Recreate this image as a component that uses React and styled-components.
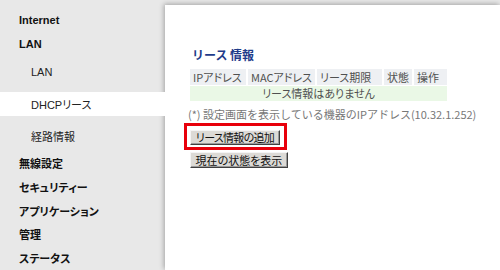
import React from "react";
import styled, { createGlobalStyle } from "styled-components";

const Global = createGlobalStyle`
  html, body { margin: 0; padding: 0; }
  body {
    background: #e8e8e8;
    font-family: "Liberation Sans", "Noto Sans CJK JP", sans-serif;
    font-feature-settings: "palt";
    color: #222;
    width: 500px;
    height: 270px;
    overflow: hidden;
  }
`;

const Page = styled.div`
  display: flex;
  width: 500px;
  height: 270px;
  overflow: hidden;
`;

const Sidebar = styled.nav`
  width: 165px;
  flex: none;
  display: flex;
  flex-direction: column;
  padding-top: 8px;
  background: #e8e8e8;
`;

const TopItem = styled.div`
  height: 24px;
  display: flex;
  align-items: center;
  padding-left: 19px;
  font-size: 11px;
  font-weight: bold;
  color: #111;
`;

const SubGroup = styled.div`
  display: flex;
  flex-direction: column;
  gap: 8px;
  padding: 5px 0 3px;
`;

const SubItem = styled.div`
  height: 24px;
  display: flex;
  align-items: center;
  padding-left: 31px;
  font-size: 11px;
  color: #222;
  position: relative;
  z-index: ${(p) => (p.$active ? 2 : 0)};
  background: ${(p) => (p.$active ? "#ffffff" : "transparent")};
  margin-right: ${(p) => (p.$active ? "-4px" : "0")};
`;

const Main = styled.main`
  flex: 1;
  margin-top: 5px;
  background: #fff;
  box-shadow: -1px -1px 5px rgba(0, 0, 0, 0.3);
  padding: 43px 0 0 25px;
  position: relative;
  z-index: 1;
`;

const Heading = styled.h2`
  margin: 0 0 6px 2px;
  font-size: 12px;
  line-height: 14px;
  font-weight: bold;
  color: #1f3c8a;
  font-family: "Noto Sans CJK JP", sans-serif;
  font-feature-settings: normal;
`;

const Table = styled.table`
  border-collapse: separate;
  border-spacing: 2px 1px;
  margin-left: -2px;
  font-size: 11px;
  font-family: "Noto Sans CJK JP", sans-serif;
  color: #505050;
`;

const HeadCell = styled.th`
  box-sizing: border-box;
  width: ${(p) => p.$w}px;
  font-weight: normal;
  background: #eef0f3;
  height: 16px;
  padding: 0 3px;
  text-align: left;
  white-space: nowrap;
  line-height: 16px;
`;

const EmptyCell = styled.td`
  background: #eaf8e6;
  height: 15px;
  line-height: 15px;
  text-align: center;
  padding: 0;
`;

const Note = styled.p`
  margin: 5px 0 0 -2px;
  font-size: 11px;
  line-height: 14px;
  color: #777;
  font-family: "Noto Sans CJK JP", sans-serif;
  font-feature-settings: normal;
  white-space: nowrap;
`;

const Highlight = styled.div`
  display: inline-flex;
  margin: 2px 0 0 -6px;
  padding: 4px 4px 2px 3px;
  border: 3px solid #e8000b;
`;

const Buttons = styled.div`
  display: flex;
  flex-direction: column;
  align-items: flex-start;
`;

const Button = styled.button`
  box-sizing: border-box;
  height: 15px;
  min-width: ${(p) => p.$w || 0}px;
  padding: 0 4px;
  font-size: 11px;
  line-height: 13px;
  letter-spacing: ${(p) => p.$tight ? "-0.7px" : "0"};
  font-family: "Noto Sans CJK JP", sans-serif;
  font-feature-settings: "palt";
  color: #111;
  background: #dcdad6;
  border: 1px solid;
  border-color: #f4f4f4 #404040 #404040 #f4f4f4;
  box-shadow: inset -1px -1px 0 #9a9a9a;
  border-radius: 0;
  cursor: pointer;
  white-space: nowrap;
`;

const SecondButton = styled(Button)`
  margin-top: 2px;
  height: 16px;
`;

export default function App() {
  return (
    <>
      <Global />
      <Page>
        <Sidebar>
          <TopItem>Internet</TopItem>
          <TopItem>LAN</TopItem>
          <SubGroup>
            <SubItem>LAN</SubItem>
            <SubItem $active>DHCPリース</SubItem>
            <SubItem>経路情報</SubItem>
          </SubGroup>
          <TopItem>無線設定</TopItem>
          <TopItem>セキュリティー</TopItem>
          <TopItem>アプリケーション</TopItem>
          <TopItem>管理</TopItem>
          <TopItem>ステータス</TopItem>
        </Sidebar>
        <Main>
          <Heading>リース 情報</Heading>
          <Table>
            <thead>
              <tr>
                <HeadCell $w={56}>IPアドレス</HeadCell>
                <HeadCell $w={64}>MACアドレス</HeadCell>
                <HeadCell $w={65}>リース期限</HeadCell>
                <HeadCell $w={26}>状態</HeadCell>
                <HeadCell $w={33}>操作</HeadCell>
              </tr>
            </thead>
            <tbody>
              <tr>
                <EmptyCell colSpan={5}>リース情報はありません</EmptyCell>
              </tr>
            </tbody>
          </Table>
          <Note>(*) 設定画面を表示している機器のIPアドレス(10.32.1.252)</Note>
          <Buttons>
            <Highlight>
              <Button $w={90} $tight>リース情報の追加</Button>
            </Highlight>
            <SecondButton $w={98}>現在の状態を表示</SecondButton>
          </Buttons>
        </Main>
      </Page>
    </>
  );
}
